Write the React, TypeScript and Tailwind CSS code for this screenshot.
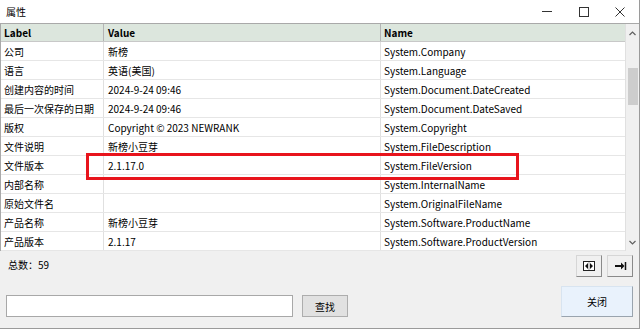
import React from "react";

type Row = { label: string; value: string; name: string };

const rows: Row[] = [
  { label: "公司", value: "新榜", name: "System.Company" },
  { label: "语言", value: "英语(美国)", name: "System.Language" },
  { label: "创建内容的时间", value: "2024-9-24 09:46", name: "System.Document.DateCreated" },
  { label: "最后一次保存的日期", value: "2024-9-24 09:46", name: "System.Document.DateSaved" },
  { label: "版权", value: "Copyright © 2023 NEWRANK", name: "System.Copyright" },
  { label: "文件说明", value: "新榜小豆芽", name: "System.FileDescription" },
  { label: "文件版本", value: "2.1.17.0", name: "System.FileVersion" },
  { label: "内部名称", value: "", name: "System.InternalName" },
  { label: "原始文件名", value: "", name: "System.OriginalFileName" },
  { label: "产品名称", value: "新榜小豆芽", name: "System.Software.ProductName" },
  { label: "产品版本", value: "2.1.17", name: "System.Software.ProductVersion" },
];

function TitleBar() {
  return (
    <div className="flex h-[23px] items-center bg-white">
      <span className="pl-[6px] text-[10px] text-black">属性</span>
      <div className="ml-auto flex h-full items-center">
        <div className="flex w-[37px] justify-center">
          <div className="h-px w-[10px] bg-[#333]" />
        </div>
        <div className="flex w-[37px] justify-center">
          <div className="h-[10px] w-[10px] border border-[#333]" />
        </div>
        <div className="flex w-[37px] justify-center pr-[2px]">
          <svg width="10" height="10" viewBox="0 0 10 10">
            <path d="M0.5 0.5 L9.5 9.5 M9.5 0.5 L0.5 9.5" stroke="#333" strokeWidth="1" />
          </svg>
        </div>
      </div>
    </div>
  );
}

function ScrollBar() {
  return (
    <div className="flex w-[13px] flex-col items-center bg-[#f0f0f0]">
      <div className="flex h-[18px] items-center justify-center">
        <svg width="7" height="5" viewBox="0 0 7 5">
          <path d="M0.5 4 L3.5 1 L6.5 4" stroke="#606060" strokeWidth="1.2" fill="none" />
        </svg>
      </div>
      <div className="mt-[26px] h-[37px] w-[10px] bg-[#cdcdcd]" />
      <div className="mt-auto flex h-[18px] items-center justify-center">
        <svg width="7" height="5" viewBox="0 0 7 5">
          <path d="M0.5 1 L3.5 4 L6.5 1" stroke="#606060" strokeWidth="1.2" fill="none" />
        </svg>
      </div>
    </div>
  );
}

function PropertyTable() {
  return (
    <div className="relative flex h-[228px] border-t border-l border-[#a9a9a9]">
      <div className="w-[624px] bg-white">
        <div className="flex h-[18px] border-b border-[#c8c8c8] bg-[#dce6dd] text-[10px] font-bold text-black">
          <div className="flex w-[103px] items-center border-r border-[#b4b4b4] pl-[3px]">Label</div>
          <div className="flex w-[277px] items-center border-r border-[#b4b4b4] pl-[4px]">Value</div>
          <div className="flex flex-1 items-center pl-[3px]">Name</div>
        </div>
        {rows.map((r) => (
          <div key={r.name} className="flex h-[19px] border-b border-[#e6e6e6] text-[10px] text-black">
            <div className="flex w-[103px] items-center whitespace-nowrap border-r border-[#e0e0e0] pl-[3px]">{r.label}</div>
            <div className="flex w-[277px] items-center whitespace-nowrap border-r border-[#e0e0e0] pl-[4px]">{r.value}</div>
            <div className="flex flex-1 items-center whitespace-nowrap pl-[3px]">{r.name}</div>
          </div>
        ))}
      </div>
      <div className="w-px bg-[#e0e0e0]" />
      <ScrollBar />
      <div className="pointer-events-none absolute left-[85px] top-[129px] h-[27px] w-[433px] border-[3px] border-[#e8141c]" />
    </div>
  );
}

function SmallButton({ children }: { children: React.ReactNode }) {
  return (
    <button className="flex h-[22px] w-[26px] items-center justify-center border border-[#d6d6d6] border-r-[#8a8a8a] border-b-[#8a8a8a] bg-[#f0f0f0]">
      {children}
    </button>
  );
}

export default function App() {
  return (
    <div className="flex h-[329px] w-[640px] flex-col overflow-hidden border-r border-b border-[#9a9a9a] bg-[#f0f0f0] font-['Noto_Sans_CJK_SC',sans-serif]">
      <TitleBar />
      <PropertyTable />
      <div className="flex flex-1 flex-col">
        <div className="flex items-start pt-[4px]">
          <span className="pl-[8px] pt-[2px] text-[10px] text-black">总数：59</span>
          <div className="ml-auto flex gap-[5px] pr-[6px]">
            <SmallButton>
              <svg width="12" height="10" viewBox="0 0 12 10">
                <rect x="0.5" y="0.5" width="11" height="9" fill="white" stroke="#222" />
                <path d="M5 2 L2 5 L5 8 Z M7 2 L10 5 L7 8 Z" fill="#111" />
                <path d="M6 1 V9" stroke="#888" strokeWidth="0.8" />
              </svg>
            </SmallButton>
            <SmallButton>
              <svg width="13" height="10" viewBox="0 0 13 10">
                <path d="M1 5 H8" stroke="#111" strokeWidth="2" />
                <path d="M7 1.5 L10.5 5 L7 8.5 Z" fill="#111" />
                <path d="M11.5 1 V9" stroke="#111" strokeWidth="1.5" />
              </svg>
            </SmallButton>
          </div>
        </div>
        <div className="mt-[9px] flex items-end">
          <input
            type="text"
            className="ml-[6px] h-[22px] w-[287px] border border-[#a8a8a8] bg-white outline-none"
          />
          <button className="ml-[9px] h-[22px] w-[46px] border border-[#adadad] bg-[#e1e1e1] text-[10px] text-black">
            查找
          </button>
          <button className="ml-auto mr-[6px] h-[31px] w-[72px] border border-[#d8e4f0] border-r-[#9aa4ae] border-b-[#9aa4ae] bg-[#e9f2fc] text-[10px] text-black">
            关闭
          </button>
        </div>
      </div>
    </div>
  );
}
